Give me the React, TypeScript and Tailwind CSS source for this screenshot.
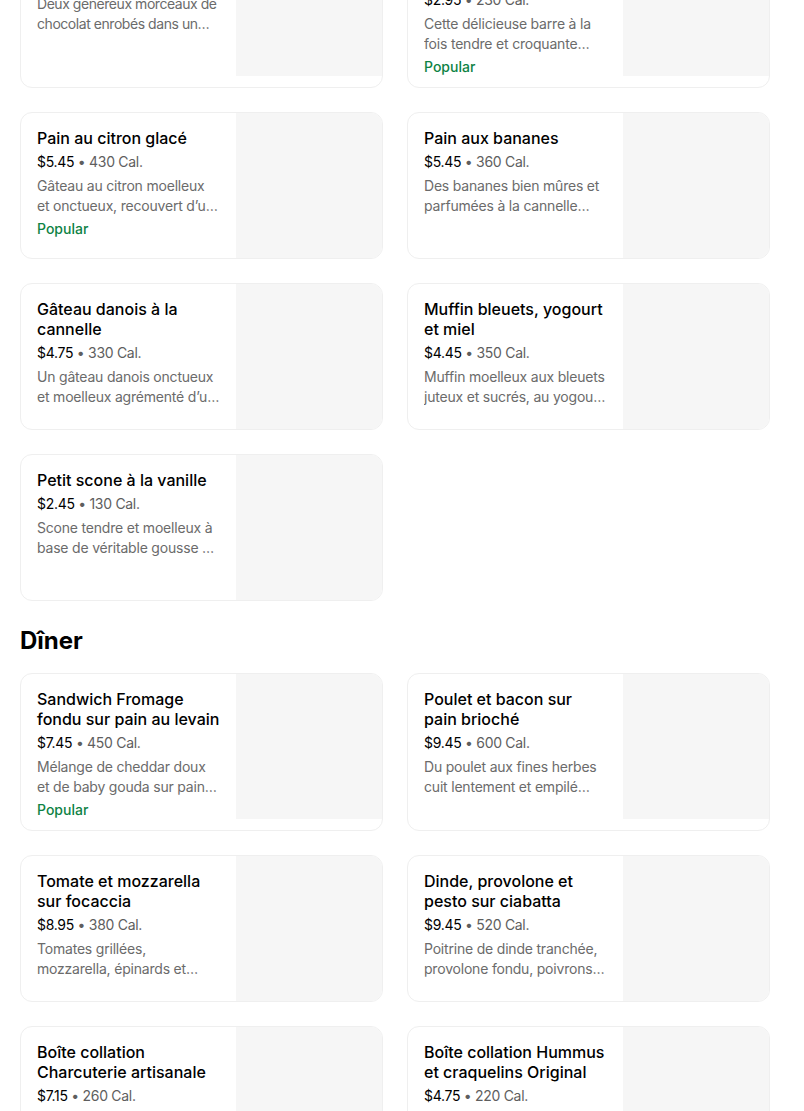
import React from "react";

type Item = {
  title: string;
  price: string;
  cal: string;
  desc: string;
  popular?: boolean;
  tight?: boolean;
};

const viennoiseries: Item[] = [
  {
    title: "Croissant au chocolat",
    price: "$3.75",
    cal: "300 Cal.",
    desc: "Deux généreux morceaux de chocolat enrobés dans un croissant feuilleté et doré au beurre.",
    tight: true,
  },
  {
    title: "Barre de rêve à la guimauve",
    price: "$2.95",
    cal: "230 Cal.",
    desc: "Cette délicieuse barre à la fois tendre et croquante fondra dans votre bouche.",
    popular: true,
  },
  {
    title: "Pain au citron glacé",
    price: "$5.45",
    cal: "430 Cal.",
    desc: "Gâteau au citron moelleux et onctueux, recouvert d’un glaçage au citron sucré et acidulé.",
    popular: true,
  },
  {
    title: "Pain aux bananes",
    price: "$5.45",
    cal: "360 Cal.",
    desc: "Des bananes bien mûres et parfumées à la cannelle pour un pain moelleux.",
  },
  {
    title: "Gâteau danois à la cannelle",
    price: "$4.75",
    cal: "330 Cal.",
    desc: "Un gâteau danois onctueux et moelleux agrémenté d’un tourbillon de cannelle et de sucre.",
  },
  {
    title: "Muffin bleuets, yogourt et miel",
    price: "$4.45",
    cal: "350 Cal.",
    desc: "Muffin moelleux aux bleuets juteux et sucrés, au yogourt et au miel, garni de sucre.",
  },
  {
    title: "Petit scone à la vanille",
    price: "$2.45",
    cal: "130 Cal.",
    desc: "Scone tendre et moelleux à base de véritable gousse de vanille, recouvert d’un glaçage.",
  },
];

const diner: Item[] = [
  {
    title: "Sandwich Fromage fondu sur pain au levain",
    price: "$7.45",
    cal: "450 Cal.",
    desc: "Mélange de cheddar doux et de baby gouda sur pain au levain grillé au beurre.",
    popular: true,
  },
  {
    title: "Poulet et bacon sur pain brioché",
    price: "$9.45",
    cal: "600 Cal.",
    desc: "Du poulet aux fines herbes cuit lentement et empilé avec du bacon fumé sur pain brioché.",
  },
  {
    title: "Tomate et mozzarella sur focaccia",
    price: "$8.95",
    cal: "380 Cal.",
    desc: "Tomates grillées, mozzarella, épinards et pesto au basilic sur pain focaccia.",
  },
  {
    title: "Dinde, provolone et pesto sur ciabatta",
    price: "$9.45",
    cal: "520 Cal.",
    desc: "Poitrine de dinde tranchée, provolone fondu, poivrons rôtis et pesto sur ciabatta.",
  },
  {
    title: "Boîte collation Charcuterie artisanale",
    price: "$7.15",
    cal: "260 Cal.",
    desc: "Salami, fromages, craquelins et fruits séchés pour une collation savoureuse.",
  },
  {
    title: "Boîte collation Hummus et craquelins Original",
    price: "$4.75",
    cal: "220 Cal.",
    desc: "Hummus onctueux accompagné de craquelins croquants et de légumes frais.",
  },
];

function Card({ item }: { item: Item }) {
  return (
    <div className="flex overflow-hidden rounded-xl border border-[#efefef] bg-white">
      <div className="flex min-w-0 flex-1 flex-col pl-4 pr-4 pt-[15px] pb-[10px]">
        <div className="text-[16px] font-medium leading-5 tracking-[0px] text-black">{item.title}</div>
        <div className="mt-1 text-[14px] leading-5 tracking-[-0.3px] text-black">
          {item.price}
          <span className="text-[#5e5e5e]"> • {item.cal}</span>
        </div>
        <div
          className={
            item.tight
              ? "mt-1 line-clamp-2 text-[14px] leading-5 tracking-[-0.45px] text-[#6b6b6b]"
              : "mt-1 line-clamp-2 text-[14px] leading-5 tracking-[-0.2px] text-[#6b6b6b]"
          }
        >
          {item.desc}
        </div>
        {item.popular && (
          <div className="mt-[3px] text-[14px] font-medium leading-5 text-[#0e8345]">Popular</div>
        )}
      </div>
      <div className="h-[145px] w-[146px] shrink-0 bg-[#f6f6f6]" />
    </div>
  );
}

export default function App() {
  return (
    <div
      className="min-h-[1111px] overflow-hidden bg-white"
      style={{ fontFamily: "Inter, 'Noto Sans', sans-serif" }}
    >
      <div className="-mt-[70px] ml-5 w-[750px]">
        <div className="grid grid-cols-2 gap-6">
          {viennoiseries.map((it) => (
            <Card key={it.title} item={it} />
          ))}
        </div>
        <h2 className="mt-[24px] mb-[16px] text-[24px] font-bold leading-8 text-black">Dîner</h2>
        <div className="grid grid-cols-2 gap-6">
          {diner.map((it) => (
            <Card key={it.title} item={it} />
          ))}
        </div>
      </div>
    </div>
  );
}
